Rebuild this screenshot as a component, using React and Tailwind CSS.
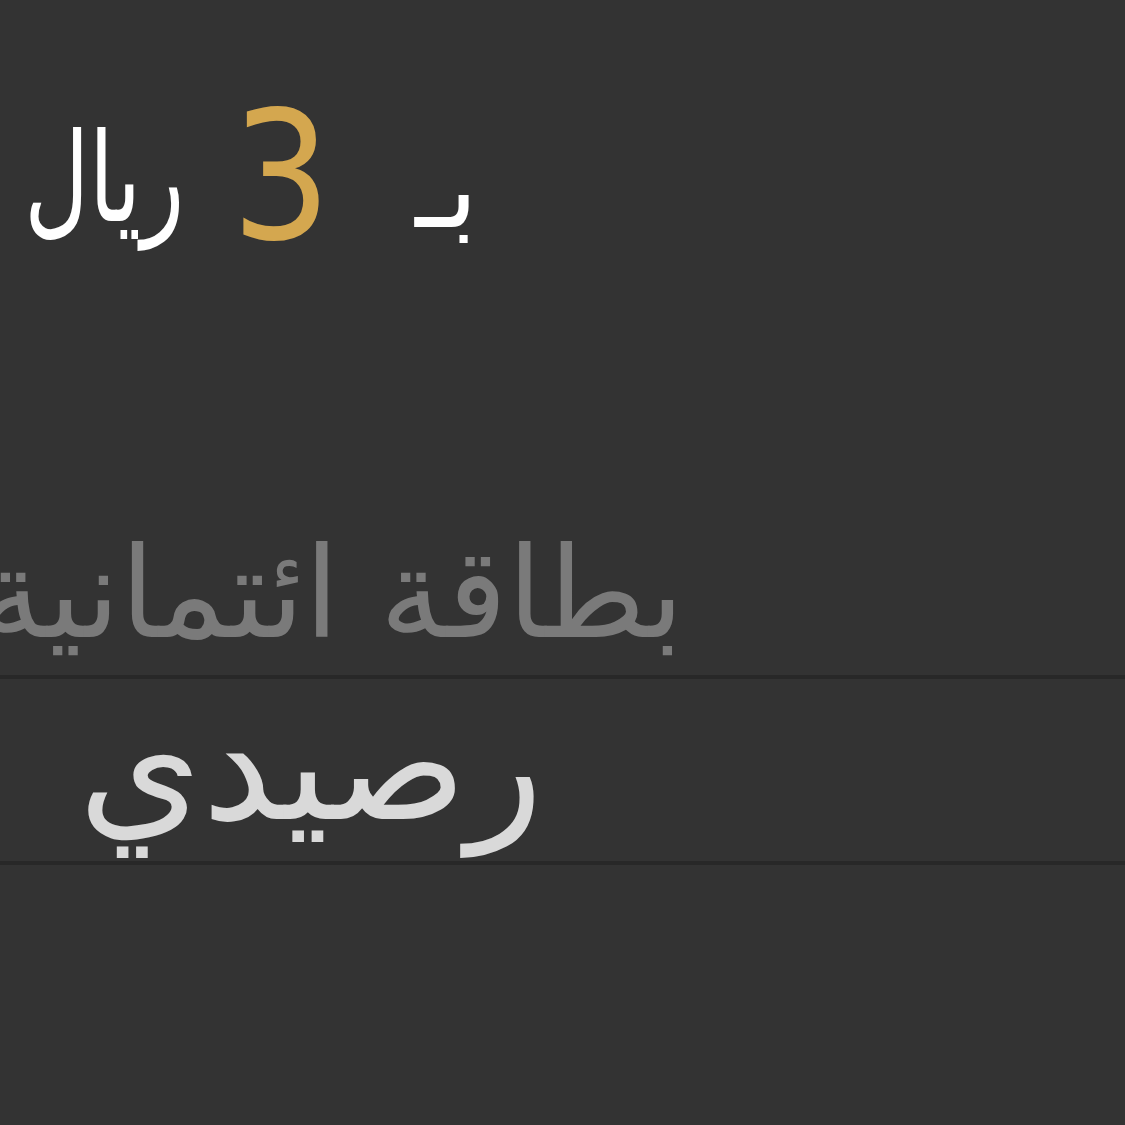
export default function App() {
  return (
    <div
      className="w-[1125px] h-[1125px] bg-[#333333] overflow-hidden flex flex-col"
      style={{ fontFamily: '"DejaVu Sans", "Noto Sans", sans-serif' }}
    >
      {/* price row */}
      <div className="h-[330px] flex items-start pt-[88px]">
        <div dir="rtl" className="w-[478px] flex items-end whitespace-nowrap">
          <span className="text-white text-[110px] leading-none mb-[20px]">بـ</span>
          <span className="inline-block origin-right scale-x-[0.88] text-[#d4a74f] text-[178px] leading-none mr-[84px] -mb-[2px]">3</span>
          <span className="inline-block origin-right scale-x-[0.72] text-white text-[124px] leading-none mr-[34px] mb-[24px]">ريال</span>
        </div>
      </div>

      {/* card title */}
      <div className="h-[345px] flex items-end overflow-hidden">
        <div dir="rtl" className="w-[684px] shrink-0 flex justify-start whitespace-nowrap text-[#7a7a7a] text-[126px] leading-none pb-[18px]">
          <span>بطاقة ائتمانية</span>
        </div>
      </div>

      {/* balance */}
      <div className="h-[190px] border-t-4 border-b-4 border-[#282828] flex items-center">
        <div dir="rtl" className="w-[543px] whitespace-nowrap text-[#d9d9d9] text-[158px] leading-none -mt-[12px]">
          رصيدي
        </div>
      </div>
    </div>
  );
}
